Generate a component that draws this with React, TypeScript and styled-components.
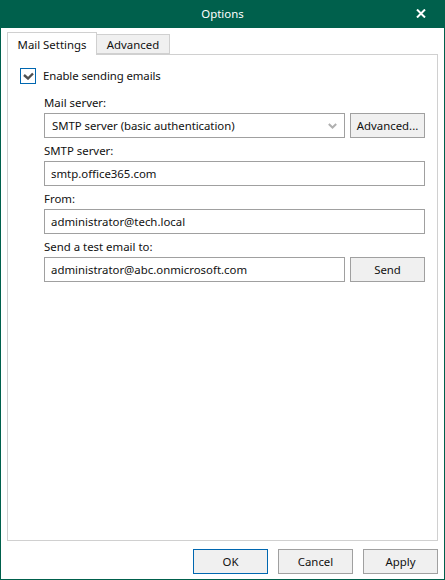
import React from "react";
import styled, { createGlobalStyle } from "styled-components";

const GlobalStyle = createGlobalStyle`
  html, body {
    margin: 0;
    padding: 0;
    background: #ffffff;
  }
  * {
    box-sizing: border-box;
  }
`;

const Window = styled.div`
  width: 445px;
  height: 580px;
  display: flex;
  flex-direction: column;
  background: #ffffff;
  border: 1px solid #00604c;
  border-top: none;
  font-family: "Noto Sans", "Open Sans", sans-serif;
  font-size: 11.4px;
  color: #111111;
`;

const TitleBar = styled.div`
  height: 28px;
  margin: 0 -1px;
  flex: none;
  display: grid;
  grid-template-columns: 1fr auto 1fr;
  align-items: center;
  background: #00604c;
  color: #ffffff;
`;

const TitleText = styled.span`
  padding-bottom: 1px;
`;

const CloseButton = styled.div`
  justify-self: end;
  display: flex;
  margin: 0 19px 2px 0;
`;

const Content = styled.div`
  flex: 1;
  display: flex;
  flex-direction: column;
  padding: 4px 6px 0 6px;
`;

const TabStrip = styled.div`
  display: flex;
  align-items: flex-end;
  height: 22px;
  flex: none;
  position: relative;
  z-index: 1;
`;

const Tab = styled.div<{ $active?: boolean }>`
  height: ${(p) => (p.$active ? "23px" : "20px")};
  margin-bottom: ${(p) => (p.$active ? "-1px" : "0")};
  width: ${(p) => (p.$active ? "90px" : "74px")};
  margin-left: ${(p) => (p.$active ? "0" : "-1px")};
  display: flex;
  align-items: center;
  justify-content: center;
  border: 1px solid #d0d0d0;
  border-bottom: ${(p) => (p.$active ? "none" : "1px solid #d0d0d0")};
  background: ${(p) => (p.$active ? "#ffffff" : "#f0f0f0")};
`;

const Panel = styled.div`
  height: 487px;
  flex: none;
  display: flex;
  flex-direction: column;
  border: 1px solid #d0d0d0;
  padding: 13px 12px 0 12px;
`;

const CheckRow = styled.label`
  display: flex;
  align-items: center;
  gap: 7px;
  height: 16px;
  margin-bottom: 6px;
`;

const CheckText = styled.span`
  padding-bottom: 2px;
  letter-spacing: -0.1px;
`;

const CheckBox = styled.span`
  width: 16px;
  height: 16px;
  display: flex;
  align-items: center;
  justify-content: center;
  background: #ffffff;
  border: 1px solid #0067b0;
`;

const Form = styled.div`
  display: flex;
  flex-direction: column;
  padding-left: 24px;
`;

const Field = styled.div`
  display: flex;
  flex-direction: column;
`;

const FieldLabel = styled.div`
  height: 23px;
  display: flex;
  align-items: center;
  padding-top: 1px;
`;

const Row = styled.div`
  display: flex;
  gap: 5px;
`;

const TextInput = styled.input`
  flex: 1 1 auto;
  min-width: 0;
  width: 100%;
  height: 25px;
  padding: 0 6px;
  border: 1px solid #a0a0a0;
  border-radius: 0;
  background: #ffffff;
  outline: none;
  font: inherit;
  color: inherit;
`;

const Combo = styled.div`
  flex: 1;
  height: 25px;
  display: flex;
  align-items: center;
  justify-content: space-between;
  padding: 0 7px 0 7px;
  border: 1px solid #a0a0a0;
  background: #ffffff;
  letter-spacing: -0.05px;
`;

const Button = styled.button<{ $default?: boolean }>`
  width: 75px;
  height: 25px;
  flex: none;
  padding: 0;
  border: 1px solid ${(p) => (p.$default ? "#0067b0" : "#a0a0a0")};
  border-radius: 0;
  background: #f0f0f0;
  font: inherit;
  color: inherit;
`;

const Footer = styled.div`
  display: flex;
  justify-content: flex-end;
  gap: 10px;
  padding-top: 8px;
`;

const CloseIcon = () => (
  <svg width="10" height="9" viewBox="0 0 10 9">
    <path d="M1 0.5 L9 8.5 M9 0.5 L1 8.5" stroke="#ffffff" strokeWidth="2" fill="none" />
  </svg>
);

const CheckIcon = () => (
  <svg width="11" height="8" viewBox="0 0 11 8">
    <path d="M1 3 L5 6.5 L10 1.5" stroke="#505050" strokeWidth="2.4" fill="none" />
  </svg>
);

const ChevronIcon = () => (
  <svg width="9" height="6" viewBox="0 0 9 6">
    <path d="M0.8 1 L4.5 4.5 L8.2 1" stroke="#b0b0b0" strokeWidth="2" fill="none" />
  </svg>
);

const App = () => {
  return (
    <Window>
      <GlobalStyle />
      <TitleBar>
        <span />
        <TitleText>Options</TitleText>
        <CloseButton>
          <CloseIcon />
        </CloseButton>
      </TitleBar>
      <Content>
        <TabStrip>
          <Tab $active>Mail Settings</Tab>
          <Tab>Advanced</Tab>
        </TabStrip>
        <Panel>
          <CheckRow>
            <CheckBox>
              <CheckIcon />
            </CheckBox>
            <CheckText>Enable sending emails</CheckText>
          </CheckRow>
          <Form>
            <Field>
              <FieldLabel>Mail server:</FieldLabel>
              <Row>
                <Combo>
                  SMTP server (basic authentication)
                  <ChevronIcon />
                </Combo>
                <Button>Advanced...</Button>
              </Row>
            </Field>
            <Field>
              <FieldLabel>SMTP server:</FieldLabel>
              <TextInput readOnly value="smtp.office365.com" />
            </Field>
            <Field>
              <FieldLabel>From:</FieldLabel>
              <TextInput readOnly value="administrator@tech.local" />
            </Field>
            <Field>
              <FieldLabel>Send a test email to:</FieldLabel>
              <Row>
                <TextInput readOnly value="administrator@abc.onmicrosoft.com" />
                <Button>Send</Button>
              </Row>
            </Field>
          </Form>
        </Panel>
        <Footer>
          <Button $default>OK</Button>
          <Button>Cancel</Button>
          <Button>Apply</Button>
        </Footer>
      </Content>
    </Window>
  );
};

export default App;
